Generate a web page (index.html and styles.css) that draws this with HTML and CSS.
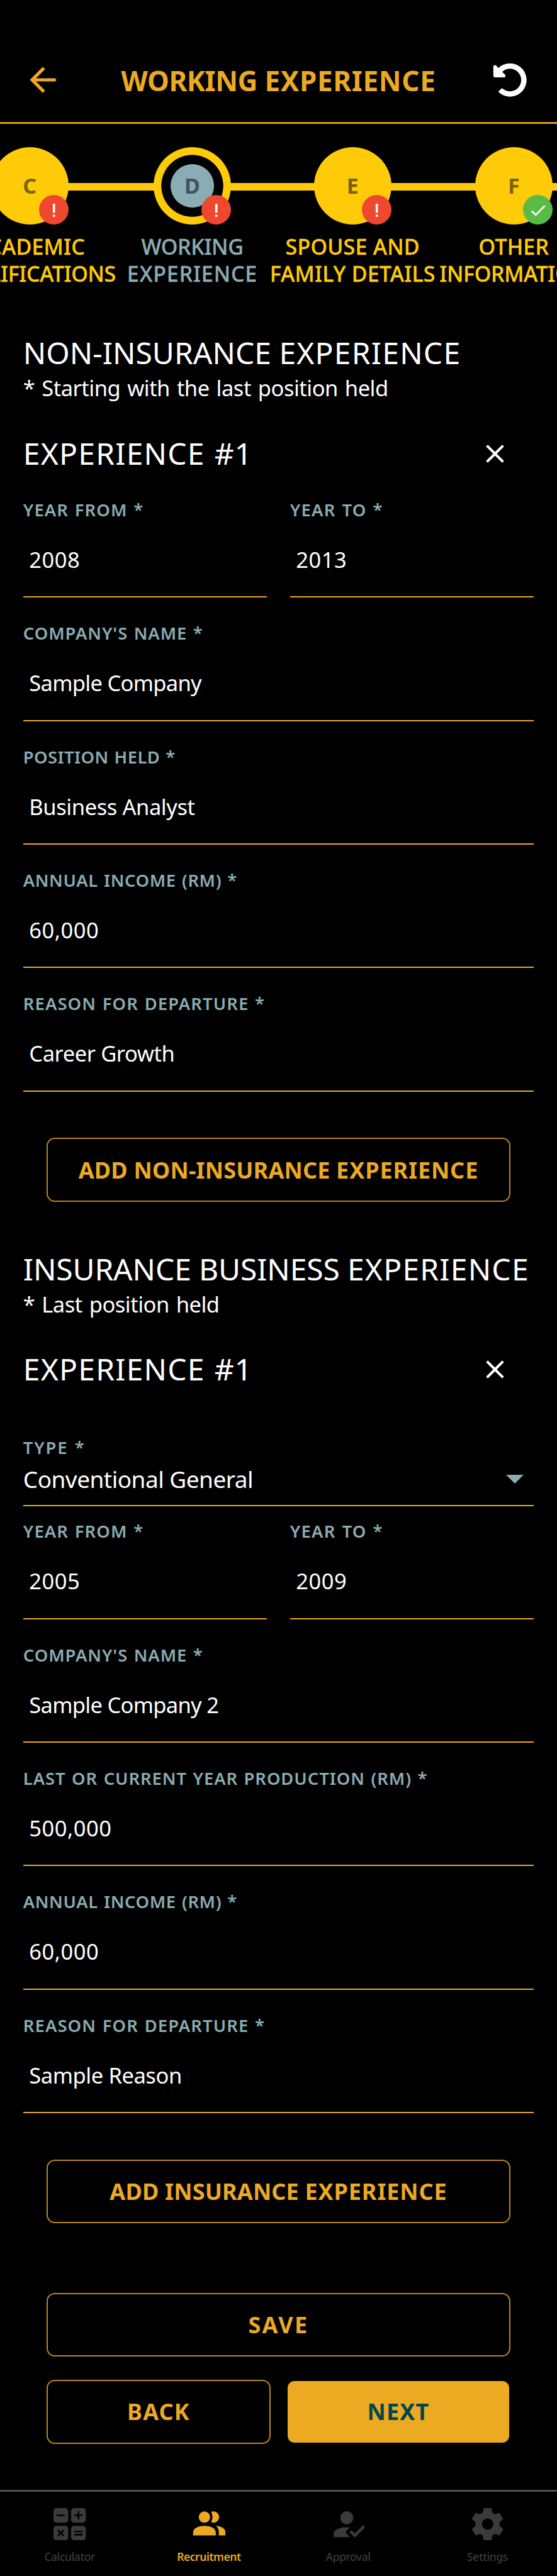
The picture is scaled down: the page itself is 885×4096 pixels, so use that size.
FILE: index.html
```html
<!DOCTYPE html>
<html lang="en">
<head>
<meta charset="utf-8">
<title>Working Experience</title>
<link rel="stylesheet" href="styles.css">
</head>
<body>
<header class="topbar">
  <svg class="back" viewBox="0 0 24 24"><path d="M20 11H7.83l5.59-5.59L12 4l-8 8 8 8 1.41-1.41L7.83 13H20z"/></svg>
  <h1 class="title"><span class="snug">WORKING</span> <span class="xp">EXPERIENCE</span></h1>
  <svg class="undo" viewBox="0 0 512 512"><path d="M255.545 8c-66.269.119-126.438 26.233-170.86 68.685L48.971 40.971C33.851 25.851 8 36.559 8 57.941V192c0 13.255 10.745 24 24 24h134.059c21.382 0 32.09-25.851 16.971-40.971l-41.75-41.75c30.864-28.899 70.801-44.907 113.23-45.273 92.398-.798 170.283 73.977 169.484 169.442C423.236 348.009 349.816 424 256 424c-41.127 0-79.997-14.678-110.63-41.556-4.743-4.161-11.906-3.908-16.368.553L89.34 422.659c-4.872 4.872-4.631 12.815.482 17.433C133.798 479.813 192.074 504 256 504c136.966 0 247.999-111.033 248-247.998C504.001 119.193 392.354 7.755 255.545 8z"/></svg>
</header>

<nav class="stepper">
  <div class="step step-c">
    <div class="dot"><b>C</b><i class="badge"><svg viewBox="0 0 24 24"><path d="M11.2 7.1h1.8v7.3h-1.8zM11.2 16.1h1.8v1.6h-1.8z"/></svg></i></div>
    <div class="step-label">ACADEMIC<br><span class="snug">QUALIFICATIONS</span></div>
  </div>
  <div class="step step-d current">
    <div class="dot"><b>D</b><i class="badge"><svg viewBox="0 0 24 24"><path d="M11.2 7.1h1.8v7.3h-1.8zM11.2 16.1h1.8v1.6h-1.8z"/></svg></i></div>
    <div class="step-label"><span class="snug">WORKING</span><br><span class="xp">EXPERIENCE</span></div>
  </div>
  <div class="step step-e">
    <div class="dot"><b>E</b><i class="badge"><svg viewBox="0 0 24 24"><path d="M11.2 7.1h1.8v7.3h-1.8zM11.2 16.1h1.8v1.6h-1.8z"/></svg></i></div>
    <div class="step-label">SPOUSE AND<br>FAMILY DETAILS</div>
  </div>
  <div class="step step-f">
    <div class="dot"><b>F</b><i class="badge done"><svg viewBox="0 0 24 24"><path d="M7 13l3.4 3.2 7.3-7.5" fill="none" stroke="#fff" stroke-width="1.3"/></svg></i></div>
    <div class="step-label">OTHER<br><span class="snug">INFORMATION</span></div>
  </div>
</nav>

<main class="form">
  <section>
    <h2 class="heading">NON-INSURANCE <span class="xp">EXPERIENCE</span></h2>
    <p class="note">* Starting with the last position held</p>
    <div class="entry-head">
      <h3 class="heading entry-title"><span class="xp">EXPERIENCE</span> #1</h3>
      <svg class="close" viewBox="0 0 24 24"><path d="M19 6.41L17.59 5 12 10.59 6.41 5 5 6.41 10.59 12 5 17.59 6.41 19 12 13.41 17.59 19 19 17.59 13.41 12z"/></svg>
    </div>
    <div class="pair">
      <div class="field"><label>YEAR FROM *</label><p class="value number">2008</p></div>
      <div class="field"><label class="wide">YEAR TO *</label><p class="value number">2013</p></div>
    </div>
    <div class="field"><label class="normal">COMPANY'S NAME *</label><p class="value name">Sample Company</p></div>
    <div class="field"><label class="tightest">POSITION HELD *</label><p class="value">Business Analyst</p></div>
    <div class="field"><label class="tighter">ANNUAL INCOME (RM) *</label><p class="value number">60,000</p></div>
    <div class="field"><label>REASON FOR DEPARTURE *</label><p class="value">Career Growth</p></div>
    <button class="btn add">ADD NON-INSURANCE <span class="xp">EXPERIENCE</span></button>
  </section>

  <section class="business">
    <h2 class="heading business-title">INSURANCE BUSINESS <span class="xp">EXPERIENCE</span></h2>
    <p class="note">* Last position held</p>
    <div class="entry-head">
      <h3 class="heading entry-title"><span class="xp">EXPERIENCE</span> #1</h3>
      <svg class="close" viewBox="0 0 24 24"><path d="M19 6.41L17.59 5 12 10.59 6.41 5 5 6.41 10.59 12 5 17.59 6.41 19 12 13.41 17.59 19 19 17.59 13.41 12z"/></svg>
    </div>
    <div class="select">
      <label class="widest">TYPE *</label>
      <div class="choice"><span>Conventional General</span><svg class="caret" viewBox="0 0 28 14"><path d="M0 0h28L14 14z"/></svg></div>
    </div>
    <div class="pair tight">
      <div class="field"><label>YEAR FROM *</label><p class="value number">2005</p></div>
      <div class="field"><label class="wide">YEAR TO *</label><p class="value number">2009</p></div>
    </div>
    <div class="field"><label class="normal">COMPANY'S NAME *</label><p class="value name">Sample Company 2</p></div>
    <div class="field"><label class="normal">LAST OR CURRENT YEAR PRODUCTION (RM) *</label><p class="value number">500,000</p></div>
    <div class="field"><label class="tighter">ANNUAL INCOME (RM) *</label><p class="value number">60,000</p></div>
    <div class="field"><label>REASON FOR DEPARTURE *</label><p class="value">Sample Reason</p></div>
    <button class="btn add">ADD INSURANCE <span class="xp">EXPERIENCE</span></button>
  </section>

  <div class="actions">
    <button class="btn save">SAVE</button>
    <div class="action-row">
      <button class="btn short">BACK</button>
      <button class="btn short primary">NEXT</button>
    </div>
  </div>
</main>

<footer class="tabs">
  <div class="tab">
    <svg viewBox="69 40 192 192"><g fill="currentColor"><rect x="72" y="44" width="86" height="85" rx="18"/><rect x="175" y="44" width="86" height="85" rx="18"/><rect x="72" y="147" width="86" height="84" rx="18"/><rect x="175" y="147" width="86" height="84" rx="18"/></g><path d="M91 86h48M194 86h48M218 62v48M98 172l34 34M132 172l-34 34M194 180h48M194 199h48" stroke="#000" stroke-width="9.5"/></svg>
    <span>Calculator</span>
  </div>
  <div class="tab active">
    <svg viewBox="879 40 192 192"><g fill="currentColor"><circle cx="948" cy="96" r="33"/><path d="M987 66a33 33 0 1 1 0 60Q1003 96 987 66z"/><path d="M882 203v-17c0-28 36-39 66-39s66 11 66 39v17z"/><path d="M1015 147c32 2 56 16 56 39v17h-39v-17c0-17-6-30-17-39z"/></g></svg>
    <span>Recruitment</span>
  </div>
  <div class="tab">
    <svg viewBox="69 40 192 192"><g fill="currentColor"><circle cx="157" cy="100" r="38"/><path d="M81 213v-21c0-25 38-37 76-37q9 0 18 2l-27 27 28 29z"/><path d="M172 184l13-12 19 19 48-48 12 13-60 60z"/></g></svg>
    <span>Approval</span>
  </div>
  <div class="tab">
    <svg viewBox="879 40 192 192"><path fill="currentColor" fill-rule="evenodd" d="M954 44h46l4 26q8 4 14 10l28-9 22 37-21 19v20l21 19-22 37-28-9q-6 5-14 9l-4 28h-46l-5-28q-8-4-15-9l-27 9-22-37 22-19v-20l-22-19 22-37 27 9q7-6 15-10zM977 104a33 33 0 1 0 0 66 33 33 0 1 0 0-66z"/></svg>
    <span>Settings</span>
  </div>
</footer>
</body>
</html>
```

FILE: styles.css
```css
* { box-sizing: border-box; }
body {
  margin: 0;
  background: #000;
  color: #fff;
  font-family: "Noto Sans", sans-serif;
}
h1, h2, h3, p { margin: 0; font-weight: 400; }
svg { display: block; flex: none; }

/* word-level tracking */
.xp { letter-spacing: 0.025em; }
.snug { letter-spacing: -0.01em; }

.topbar {
  height: 197px;
  padding: 60px 48px 0 36.8px;
  border-bottom: 3px solid #dc9e20;
  display: grid;
  grid-template-columns: 1fr auto 1fr;
  align-items: center;
}
.back { width: 62px; height: 62px; fill: #ecaa22; }
.undo { width: 54.5px; height: 54.5px; fill: #fff; justify-self: end; }
.title {
  padding: 1px 0 0 11px;
  font-size: 44px;
  line-height: 60px;
  font-weight: 700;
  color: #ecaa22;
  white-space: nowrap;
}
.title .xp { letter-spacing: 0.015em; }

.stepper {
  position: relative;
  display: flex;
  justify-content: flex-end;
  padding-top: 36.5px;
  width: 940.4px;
  max-width: 100%;
  overflow: hidden;
}
.stepper::before {
  content: "";
  position: absolute;
  left: 0;
  right: 0;
  top: 94px;
  height: 12.3px;
  background: #ffcb08;
}
.step {
  position: relative;
  flex: none;
  display: flex;
  flex-direction: column;
  align-items: center;
  color: #ffcb08;
}
.step-c { width: 271.6px; }
.step-d { width: 245px; }
.step-e { width: 264.4px; }
.step-f { width: 248px; margin-right: -55.4px; }
.dot {
  position: relative;
  width: 123px;
  height: 123px;
  border-radius: 50%;
  background: #ffcb08;
  color: #786200;
  display: flex;
  align-items: center;
  justify-content: center;
  font-size: 34px;
}
.current .dot {
  background: radial-gradient(circle, #8aacb3 0 34px, #000 34.8px 48.8px, #ffcb08 49.6px);
  color: #42525a;
}
.current { color: #8aacb3; }
.badge {
  position: absolute;
  right: 0;
  bottom: 0;
  width: 47px;
  height: 47px;
  border-radius: 50%;
  background: #f0472f;
}
.badge svg { width: 47px; height: 47px; fill: #fff; }
.badge.done { background: #5aba48; }
.step-label {
  margin-top: 14px;
  text-align: center;
  white-space: nowrap;
  font-size: 34px;
  line-height: 43.4px;
  font-weight: 500;
  letter-spacing: 0.2px;
  -webkit-text-stroke: 0.35px currentColor;
}

.form { padding: 74px 36.8px 0; }
.heading { font-size: 48px; line-height: 60px; white-space: nowrap; letter-spacing: 0; }
.business-title { letter-spacing: -0.15px; }
.entry-title { letter-spacing: 1px; word-spacing: 1.5px; }
.note {
  margin-top: 4px;
  font-size: 34.5px;
  line-height: 44px;
  letter-spacing: -0.5px;
  word-spacing: 2.5px;
}
.entry-head {
  margin-top: 51.7px;
  padding-right: 37.2px;
  display: flex;
  align-items: center;
  justify-content: space-between;
}
.close { width: 49px; height: 49px; fill: #fff; }
.pair { display: grid; grid-template-columns: 1fr 1fr; column-gap: 36.6px; }
.entry-head + .pair { margin-top: 3.1px; }
.field {
  height: 196.3px;
  padding-top: 39px;
  border-bottom: 2px solid #ecaa22;
}
.tight .field { height: 179.3px; padding-top: 22px; }
label {
  display: block;
  font-size: 27.4px;
  line-height: 36px;
  font-weight: 600;
  letter-spacing: 1.1px;
  word-spacing: 1.5px;
  color: #8aacb3;
  white-space: nowrap;
}
label.tightest { letter-spacing: 0.4px; }
label.tighter { letter-spacing: 0.6px; }
label.normal { letter-spacing: 0.93px; }
label.wide { letter-spacing: 1.25px; }
label.widest { letter-spacing: 1.8px; }
.value {
  margin-top: 38px;
  padding-left: 9.5px;
  font-size: 34.5px;
  line-height: 46px;
  letter-spacing: -0.43px;
}
.value.number { letter-spacing: 0.5px; }
.value.name { letter-spacing: -0.71px; }
.select { height: 188.1px; padding-top: 76.6px; border-bottom: 2px solid #ecaa22; }
.choice {
  margin-top: 9px;
  padding-right: 15.8px;
  display: flex;
  align-items: center;
  justify-content: space-between;
  font-size: 37px;
  line-height: 46px;
  letter-spacing: -0.52px;
}
.caret { width: 28px; height: 14px; fill: #8aacb3; }

.btn {
  display: block;
  width: 100%;
  height: 101.5px;
  padding: 1px 0 0;
  border: 2px solid #ba861b;
  border-radius: 13px;
  background: none;
  background-clip: padding-box;
  color: #ecaa22;
  font: 700 36px/50px "Noto Sans", sans-serif;
  letter-spacing: 0.17px;
  white-space: nowrap;
}
.btn.save { letter-spacing: 2.3px; }
.btn.short { letter-spacing: 1.15px; }
.btn.primary { background-color: #ecaa22; border-color: transparent; color: #004750; }
.btn.add { width: 737px; margin: 73.8px 37.2px 0; }
.business { margin-top: 76.7px; }
.actions {
  margin: 110.7px 37.2px 0;
  display: flex;
  flex-direction: column;
  gap: 36.9px;
}
.action-row { display: flex; gap: 25px; }

.tabs {
  margin-top: 73px;
  height: 137.3px;
  padding-top: 25px;
  border-top: 3px solid #505050;
  display: grid;
  grid-template-columns: repeat(4, 1fr);
}
.tab {
  display: flex;
  flex-direction: column;
  align-items: center;
  color: #3a3a3a;
  font-size: 17.5px;
  line-height: 24px;
  font-weight: 500;
  letter-spacing: -0.45px;
}
.tab svg { width: 52.4px; height: 52.4px; margin-bottom: 13.5px; }
.tab.active { color: #ecaa22; font-weight: 600; }
```
